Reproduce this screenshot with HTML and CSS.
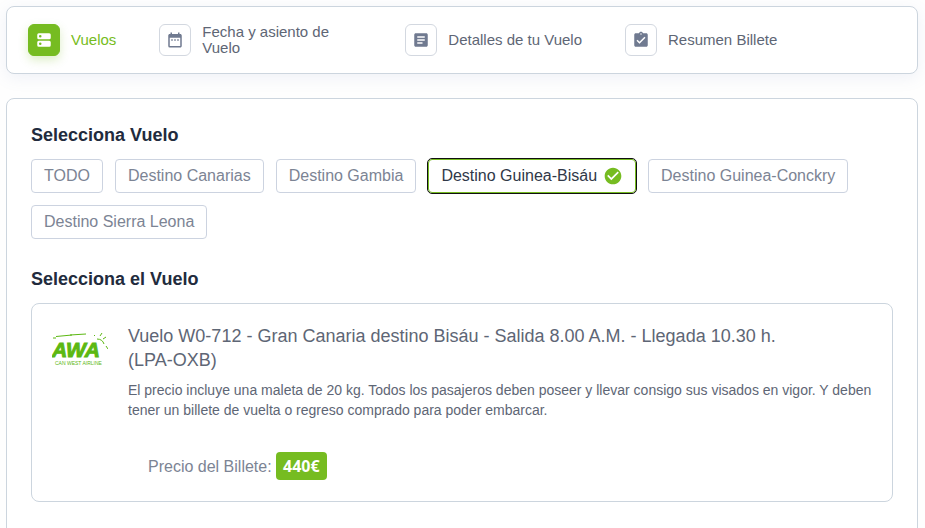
FILE: index.html
```html
<!DOCTYPE html>
<html lang="es">
<head>
    <meta charset="UTF-8" />
    <meta name="viewport" content="width=device-width, initial-scale=1" />
    <title>Vuelos</title>
    <link rel="stylesheet" href="styles.css">
</head>
<body>
    <nav class="card steps">
        <a href="#" class="step active">
            <span class="step-icon">
                <svg viewBox="0 0 24 24"><path fill-rule="evenodd" d="M5 3h14a2 2 0 0 1 2 2v4a2 2 0 0 1-2 2H5a2 2 0 0 1-2-2V5a2 2 0 0 1 2-2zm2 2.300a1.700 1.700 0 1 0 0 3.400 1.700 1.700 0 0 0 0-3.400zM5 13h14a2 2 0 0 1 2 2v4a2 2 0 0 1-2 2H5a2 2 0 0 1-2-2v-4a2 2 0 0 1 2-2zm2 2.300a1.700 1.700 0 1 0 0 3.400 1.700 1.700 0 0 0 0-3.400z"/></svg>
            </span>
            <span class="step-text">Vuelos</span>
        </a>
        <a href="#" class="step">
            <span class="step-icon">
                <svg viewBox="0 0 24 24"><path d="M9 11H7v2h2v-2zm4 0h-2v2h2v-2zm4 0h-2v2h2v-2zm2-7h-1V2h-2v2H8V2H6v2H5c-1.110 0-2 .9-2 2v14a2 2 0 0 0 2 2h14c1.100 0 2-.9 2-2V6c0-1.100-.9-2-2-2zm0 16H5V9h14v11z"/></svg>
            </span>
            <span class="step-text">Fecha y asiento de Vuelo</span>
        </a>
        <a href="#" class="step">
            <span class="step-icon">
                <svg viewBox="0 0 24 24"><path d="M19 3H5c-1.100 0-2 .9-2 2v14c0 1.100.9 2 2 2h14c1.100 0 2-.9 2-2V5c0-1.100-.9-2-2-2zm-5 14H7v-2h7v2zm3-4H7v-2h10v2zm0-4H7V7h10v2z"/></svg>
            </span>
            <span class="step-text">Detalles de tu Vuelo</span>
        </a>
        <a href="#" class="step">
            <span class="step-icon">
                <svg viewBox="0 0 24 24"><path d="M19 3h-4.180C14.400 1.840 13.300 1 12 1s-2.400.84-2.820 2H5c-1.100 0-2 .9-2 2v14c0 1.100.9 2 2 2h14c1.100 0 2-.9 2-2V5c0-1.100-.9-2-2-2zm-7 0c.55 0 1 .45 1 1s-.45 1-1 1-1-.45-1-1 .45-1 1-1zm-2 14l-4-4 1.410-1.410L10 14.170l6.590-6.590L18 9l-8 8z"/></svg>
            </span>
            <span class="step-text">Resumen Billete</span>
        </a>
    </nav>

    <main class="card content">
        <h2>Selecciona Vuelo</h2>
        <div class="filters">
            <button type="button" class="filter">TODO</button>
            <button type="button" class="filter">Destino Canarias</button>
            <button type="button" class="filter">Destino Gambia</button>
            <button type="button" class="filter selected" aria-pressed="true">
                Destino Guinea-Bisáu
                <svg viewBox="0 0 24 24"><path d="M12 2C6.500 2 2 6.500 2 12s4.500 10 10 10 10-4.500 10-10S17.500 2 12 2zm-2 15l-5-5 1.410-1.410L10 14.170l7.590-7.590L19 8l-9 9z"/></svg>
            </button>
            <button type="button" class="filter">Destino Guinea-Conckry</button>
            <button type="button" class="filter">Destino Sierra Leona</button>
        </div>

        <h2>Selecciona el Vuelo</h2>
        <article class="flight">
            <svg class="logo" viewBox="0 0 56 34">
                <path d="M4 4.500L20 3M18 3L34 2" class="wing"/>
                <path d="M1 6h3M42 3l1 1M48 4l2-3M51 7l3-2M45 7c4 0 6 2 7 5M54 14l2 3" class="rays"/>
                <text x="0" y="25" class="logo-name">AWA</text>
                <text x="3" y="33" class="logo-sub">CAN WEST AIRLINE</text>
            </svg>
            <div class="flight-info">
                <h3>Vuelo W0-712 - Gran Canaria destino Bisáu - Salida 8.00 A.M. - Llegada 10.30 h.<br>(LPA-OXB)</h3>
                <p>El precio incluye una maleta de 20 kg. Todos los pasajeros deben poseer y llevar consigo sus visados en vigor. Y deben tener un billete de vuelta o regreso comprado para poder embarcar.</p>
                <div class="price">Precio del Billete: <strong>440€</strong></div>
            </div>
        </article>
    </main>
</body>
</html>
```
FILE: styles.css
```css
* {
    box-sizing: border-box;
    margin: 0;
    padding: 0;
}

body {
    padding: 6px 7px 0 6px;
    background-color: #fefefe;
    color: #5e6675;
    font-family: "Liberation Sans", Arial, sans-serif;
}

html {
    scrollbar-width: none;
}

.card {
    border: 1px solid #ccd5de;
    border-radius: 8px;
    background-color: #fff;
}

/* pasos */
.steps {
    display: flex;
    align-items: center;
    gap: 43px;
    min-height: 68px;
    padding: 12px 21px;
    margin-bottom: 24px;
    box-shadow: 0 4px 16px rgba(110, 130, 190, 0.1);
}

.step {
    display: flex;
    align-items: center;
    gap: 11px;
    color: #5e6675;
    font-size: 15px;
    line-height: 16px;
    text-decoration: none;
}

.step-icon {
    display: flex;
    flex: none;
    align-items: center;
    justify-content: center;
    width: 32px;
    height: 32px;
    border: 1px solid #d3d8e0;
    border-radius: 6px;
}

.step-icon svg {
    width: 18px;
    height: 18px;
    fill: #707a90;
}

.step-text {
    max-width: 160px;
}

.step.active {
    color: #76bc21;
}

.active .step-icon {
    border-color: #76bc21;
    background-color: #76bc21;
    box-shadow: 0 4px 10px rgba(118, 188, 33, 0.25);
}

.active .step-icon svg {
    fill: #fff;
}

/* contenido */
.content {
    padding: 24px 24px 40px;
}

h2 {
    margin-bottom: 12px;
    color: #222b3d;
    font-size: 18px;
    line-height: 24px;
}

.filters {
    display: flex;
    flex-wrap: wrap;
    gap: 12px;
    margin-bottom: 28px;
}

.filter {
    display: flex;
    align-items: center;
    gap: 6px;
    height: 34px;
    padding: 0 12px;
    border: 1px solid #ccd3e0;
    border-radius: 4px;
    background-color: #fff;
    color: #7c8494;
    font-family: inherit;
    font-size: 16px;
    cursor: pointer;
}

.filter svg {
    width: 20px;
    height: 20px;
    fill: #76bc21;
}

.filter.selected {
    border-color: #76bc21;
    outline: 1px solid #101010;
    color: #303848;
}

.flight {
    display: flex;
    gap: 20px;
    padding: 20px;
    border: 1px solid #ccd5de;
    border-radius: 8px;
}

.logo {
    flex: none;
    width: 56px;
    height: 34px;
    margin-top: 8px;
    fill: #5cb812;
}

.wing,
.rays {
    fill: none;
    stroke: #5cb812;
}

.logo-name {
    font-size: 21px;
    font-style: italic;
    font-weight: bold;
    stroke: #5cb812;
}

.logo-sub {
    font-size: 5px;
}

h3 {
    margin-bottom: 8px;
    font-size: 18px;
    font-weight: normal;
    line-height: 24px;
}

.flight-info p {
    margin-bottom: 32px;
    font-size: 14px;
    line-height: 20px;
}

.price {
    padding-left: 20px;
    color: #7c8494;
    font-size: 16px;
    line-height: 28px;
}

.price strong {
    display: inline-block;
    padding: 0 7px;
    border-radius: 4px;
    background-color: #76bc21;
    color: #fff;
    font-family: "Noto Sans", sans-serif;
}
```
